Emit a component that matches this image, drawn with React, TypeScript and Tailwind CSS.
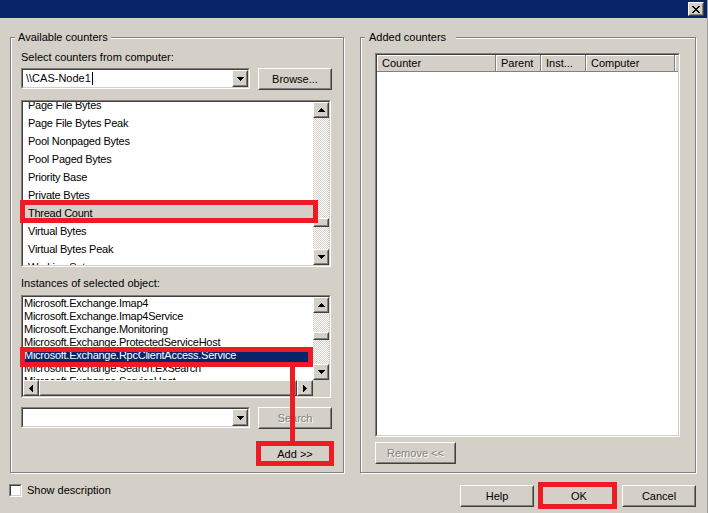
import clsx from 'clsx';
import type { ReactNode } from 'react';

const counters = [
  'Page File Bytes',
  'Page File Bytes Peak',
  'Pool Nonpaged Bytes',
  'Pool Paged Bytes',
  'Priority Base',
  'Private Bytes',
  'Thread Count',
  'Virtual Bytes',
  'Virtual Bytes Peak',
  'Working Set',
];

const instances = [
  'Microsoft.Exchange.Imap4',
  'Microsoft.Exchange.Imap4Service',
  'Microsoft.Exchange.Monitoring',
  'Microsoft.Exchange.ProtectedServiceHost',
  'Microsoft.Exchange.RpcClientAccess.Service',
  'Microsoft.Exchange.Search.ExSearch',
  'Microsoft.Exchange.ServiceHost',
];

const columns = [
  { label: 'Counter', w: 'w-[119px]' },
  { label: 'Parent', w: 'w-[45px]' },
  { label: 'Inst...', w: 'w-[45px]' },
  { label: 'Computer', w: 'w-[89px]' },
];

// 2px sunken frame (lists, combos, checkbox)
function Sunken({ className, inner, children }: { className?: string; inner?: string; children?: ReactNode }) {
  return (
    <div className={clsx('border border-t-[#808080] border-l-[#808080] border-r-white border-b-white', className)}>
      <div className={clsx('h-full w-full border border-t-[#404040] border-l-[#404040] border-r-[#d4d0c8] border-b-[#d4d0c8] bg-white overflow-hidden', inner)}>
        {children}
      </div>
    </div>
  );
}

// 2px raised frame (buttons, scroll arrows, thumbs)
function Raised({ className, children }: { className?: string; children?: ReactNode }) {
  return (
    <div className={clsx('shrink-0 border border-t-white border-l-white border-r-[#404040] border-b-[#404040] bg-[#d4d0c8]', className)}>
      <div className="h-full w-full flex items-center justify-center border border-t-[#d4d0c8] border-l-[#d4d0c8] border-r-[#808080] border-b-[#808080]">
        {children}
      </div>
    </div>
  );
}

function Arrow({ dir, gray }: { dir: 'up' | 'down' | 'left' | 'right'; gray?: boolean }) {
  const fill = gray ? '#808080' : '#000';
  if (dir === 'up' || dir === 'down') {
    return (
      <svg width="7" height="4" viewBox="0 0 7 4" shapeRendering="crispEdges" className={dir === 'up' ? 'rotate-180' : ''}>
        <path d="M0 0h7v1h-1v1h-1v1h-1v1h-1v-1h-1v-1h-1v-1h-1z" fill={fill} />
      </svg>
    );
  }
  return (
    <svg width="4" height="7" viewBox="0 0 4 7" shapeRendering="crispEdges" className={dir === 'left' ? 'rotate-180' : ''}>
      <path d="M0 0v7h1v-1h1v-1h1v-1h1v-1h-1v-1h-1v-1h-1v-1z" fill={fill} />
    </svg>
  );
}

const checker = 'bg-[repeating-conic-gradient(#d4d0c8_0%_25%,#ffffff_0%_50%)] bg-[length:2px_2px]';

function VScroll({ thumbTop, thumbH }: { thumbTop: number; thumbH: number }) {
  return (
    <div className="w-[16px] h-full flex flex-col shrink-0">
      <Raised className="w-[16px] h-[16px]">
        <Arrow dir="up" />
      </Raised>
      <div className={clsx('flex-1 flex flex-col', checker)}>
        <div className="shrink-0" style={{ height: thumbTop }} />
        <Raised className="w-[16px]" >
          <div style={{ height: thumbH - 4 }} />
        </Raised>
      </div>
      <Raised className="w-[16px] h-[16px]">
        <Arrow dir="down" />
      </Raised>
    </div>
  );
}

function Button({ className, disabled, children }: { className?: string; disabled?: boolean; children: ReactNode }) {
  return (
    <Raised className={className}>
      <span className={clsx('leading-[13px]', disabled ? 'text-[#808080] [text-shadow:1px_1px_0_#fff]' : 'text-black')}>
        {children}
      </span>
    </Raised>
  );
}

function Combo({ value, caret }: { value?: string; caret?: boolean }) {
  return (
    <Sunken className="w-[229px] h-[21px]" inner="flex">
      <div className="flex-1 flex items-center pl-[3px] leading-[13px]">
        <span>{value}</span>
        {caret && <span className="ml-[1px] w-[1px] h-[13px] bg-black" />}
      </div>
      <Raised className="w-[16px] h-[17px]">
        <Arrow dir="down" />
      </Raised>
    </Sunken>
  );
}

function Group({ title, className, legend, children }: { title: string; className?: string; legend: string; children: ReactNode }) {
  return (
    <div className={clsx('h-[436px] border border-[#808080] shadow-[1px_1px_0_#fff,inset_1px_1px_0_#fff]', className)}>
      <span className={clsx('block w-fit -mt-[7px] h-[13px] leading-[13px] bg-[#d4d0c8]', legend)}>{title}</span>
      {children}
    </div>
  );
}

export default function App() {
  return (
    <div className="relative w-[708px] h-[513px] overflow-hidden bg-[#d4d0c8] border-r border-[#a0a0a0] flex flex-col text-[11px] text-black font-['Liberation_Sans',Arial,sans-serif]">
      {/* Title bar */}
      <div className="h-[18px] bg-[#0a246a] flex items-start justify-end pr-[3px] pt-[2px] shrink-0">
        <Raised className="w-[16px] h-[14px]">
          <svg width="8" height="7" viewBox="0 0 8 7" shapeRendering="crispEdges">
            <path d="M0 0h2v1h1v1h2v-1h1v-1h2v1h-1v1h-1v1h-1v1h1v1h1v1h1v1h-2v-1h-1v-1h-2v1h-1v1h-2v-1h1v-1h1v-1h1v-1h-1v-1h-1v-1h-1z" fill="#000" />
          </svg>
        </Raised>
      </div>

      <div className="flex pl-[10px] mt-[19px] gap-[16px]">
        {/* Available counters */}
        <Group title="Available counters" className="w-[334px]" legend="ml-[4px] px-[3px]">
          <div className="pl-[10px]">
            <p className="mt-[7px] leading-[13px]">Select counters from computer:</p>
            <div className="mt-[4px] flex items-start">
              <Combo value="\\CAS-Node1" caret />
              <Button className="ml-[8px] w-[74px] h-[22px]">Browse...</Button>
            </div>

            <Sunken className="mt-[10px] w-[310px] h-[167px]" inner="flex">
              <div className="flex-1 overflow-hidden tracking-[-0.25px]">
                <div className="-mt-[6px]">
                  {counters.map((c) => (
                    <div
                      key={c}
                      className={clsx('h-[18px] leading-[18px] pl-[5px] whitespace-nowrap', c === 'Thread Count' && 'bg-[#d4d0c8]')}
                    >
                      {c}
                    </div>
                  ))}
                </div>
              </div>
              <VScroll thumbTop={100} thumbH={9} />
            </Sunken>

            <p className="mt-[10px] leading-[13px]">Instances of selected object:</p>
            <Sunken className="mt-[5px] w-[310px] h-[103px]" inner="flex flex-col">
              <div className="h-[83px] flex">
                <div className="flex-1 overflow-hidden tracking-[-0.25px]">
                  {instances.map((i) => (
                    <div
                      key={i}
                      className={clsx(
                        'h-[13px] leading-[13px] pl-[1px] whitespace-nowrap',
                        i.includes('RpcClient') && 'bg-[#0a246a] text-white'
                      )}
                    >
                      {i}
                    </div>
                  ))}
                </div>
                <VScroll thumbTop={19} thumbH={8} />
              </div>
              <div className="h-[16px] flex">
                <Raised className="w-[16px] h-[16px]">
                  <Arrow dir="left" />
                </Raised>
                <Raised className="flex-1 h-[16px]" />
                <Raised className="w-[16px] h-[16px]">
                  <Arrow dir="right" />
                </Raised>
                <div className="w-[16px] h-[16px] bg-[#d4d0c8]" />
              </div>
            </Sunken>

            <div className="mt-[9px] flex items-start">
              <Combo />
              <Button className="ml-[8px] w-[74px] h-[22px]" disabled>
                Search
              </Button>
            </div>

            <Button className="mt-[14px] ml-[237px] w-[74px] h-[22px]">Add &gt;&gt;</Button>
          </div>
        </Group>

        {/* Added counters */}
        <Group title="Added counters" className="w-[336px]" legend="ml-[4px] pl-[4px] pr-[10px]">
          <div className="pl-[14px]">
            <Sunken className="mt-[9px] w-[305px] h-[384px]" inner="flex flex-col">
              <div className="h-[17px] flex bg-[#d4d0c8] shrink-0">
                {columns.map((col) => (
                  <div
                    key={col.label}
                    className={clsx(
                      'h-full pl-[5px] leading-[16px] border-r border-b border-[#808080] shadow-[inset_1px_1px_0_#fff]',
                      col.w
                    )}
                  >
                    {col.label}
                  </div>
                ))}
                <div className="flex-1 h-full border-b border-[#808080] shadow-[inset_1px_1px_0_#fff]" />
              </div>
            </Sunken>
            <Button className="mt-[5px] w-[81px] h-[22px]" disabled>
              Remove &lt;&lt;
            </Button>
          </div>
        </Group>
      </div>

      {/* Footer */}
      <div className="flex items-start mt-[11px]">
        <div className="flex items-center pl-[9px]">
          <Sunken className="w-[13px] h-[13px]" />
          <span className="ml-[5px] leading-[13px]">Show description</span>
        </div>
        <div className="ml-auto mr-[11px] mt-[1px] flex">
          <Button className="w-[74px] h-[22px]">Help</Button>
          <Button className="ml-[8px] w-[74px] h-[22px]">OK</Button>
          <Button className="ml-[6px] w-[74px] h-[22px]">Cancel</Button>
        </div>
      </div>

      {/* Red annotation marks */}
      <div className="absolute left-[20px] top-[200px] w-[298px] h-[23px] border-[5px] border-[#ed1c24]" />
      <div className="absolute left-[20px] top-[347px] w-[293px] h-[20px] border-[5px] border-[#ed1c24]" />
      <div className="absolute left-[290px] top-[366px] w-[5px] h-[76px] bg-[#ed1c24]" />
      <div className="absolute left-[256px] top-[441px] w-[78px] h-[25px] border-[5px] border-[#ed1c24]" />
      <div className="absolute left-[538px] top-[482px] w-[79px] h-[27px] border-[5px] border-[#ed1c24]" />
    </div>
  );
}
